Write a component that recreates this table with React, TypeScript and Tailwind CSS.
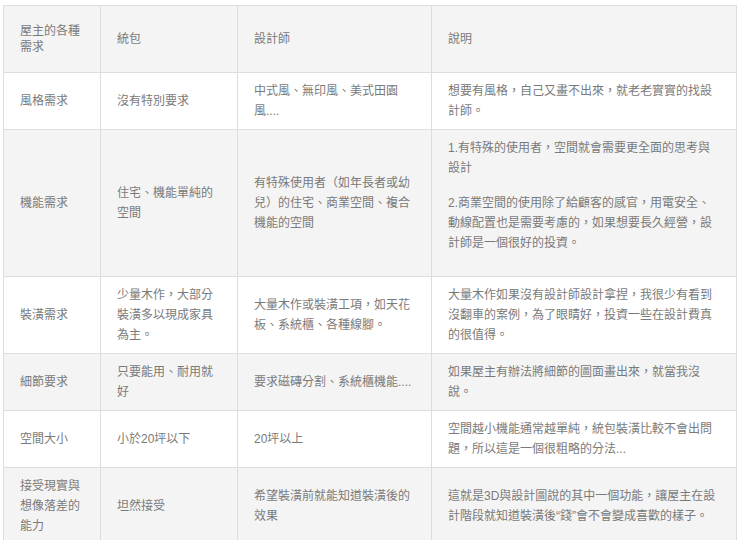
import React from 'react'

type Row = {
  need: string
  contractor: string
  designer: string
  note: string[]
}

const rows: Row[] = [
  {
    need: '風格需求',
    contractor: '沒有特別要求',
    designer: '中式風、無印風、美式田園風....',
    note: ['想要有風格，自己又畫不出來，就老老實實的找設計師。'],
  },
  {
    need: '機能需求',
    contractor: '住宅、機能單純的空間',
    designer: '有特殊使用者（如年長者或幼兒）的住宅、商業空間、複合機能的空間',
    note: [
      '1.有特殊的使用者，空間就會需要更全面的思考與設計',
      '2.商業空間的使用除了給顧客的感官，用電安全、動線配置也是需要考慮的，如果想要長久經營，設計師是一個很好的投資。',
    ],
  },
  {
    need: '裝潢需求',
    contractor: '少量木作，大部分裝潢多以現成家具為主。',
    designer: '大量木作或裝潢工項，如天花板、系統櫃、各種線腳。',
    note: ['大量木作如果沒有設計師設計拿捏，我很少有看到沒翻車的案例，為了眼睛好，投資一些在設計費真的很值得。'],
  },
  {
    need: '細節要求',
    contractor: '只要能用、耐用就好',
    designer: '要求磁磚分割、系統櫃機能....',
    note: ['如果屋主有辦法將細節的圖面畫出來，就當我沒說。'],
  },
  {
    need: '空間大小',
    contractor: '小於20坪以下',
    designer: '20坪以上',
    note: ['空間越小機能通常越單純，統包裝潢比較不會出問題，所以這是一個很粗略的分法...'],
  },
  {
    need: '接受現實與想像落差的能力',
    contractor: '坦然接受',
    designer: '希望裝潢前就能知道裝潢後的效果',
    note: ['這就是3D與設計圖說的其中一個功能，讓屋主在設計階段就知道裝潢後“錢”會不會變成喜歡的樣子。'],
  },
]

const cell = 'border border-[#dddddd] px-4 py-2 align-middle text-left font-normal'

export default function App() {
  return (
    <div className="min-h-[540px] bg-white pl-[3px] pt-[5px] font-['Liberation_Sans','Noto_Sans_CJK_TC',sans-serif] text-[12px] leading-[20px] text-[#7a7a7a]">
      <table className="w-[733px] table-fixed border-collapse">
        <colgroup>
          <col className="w-[97px]" />
          <col className="w-[137px]" />
          <col className="w-[194px]" />
          <col className="w-[305px]" />
        </colgroup>
        <thead>
          <tr className="h-[67px] bg-[#f4f4f4]">
            <th className={`${cell} leading-[16px]`}>屋主的各種需求</th>
            <th className={cell}>統包</th>
            <th className={cell}>設計師</th>
            <th className={cell}>說明</th>
          </tr>
        </thead>
        <tbody>
          {rows.map((row, i) => (
            <tr key={row.need} className={i % 2 === 0 ? 'bg-white' : 'bg-[#f4f4f4]'}>
              <td className={cell}>{row.need}</td>
              <td className={cell}>{row.contractor}</td>
              <td className={cell}>{row.designer}</td>
              <td className={cell}>
                {row.note.length > 1
                  ? row.note.map((p) => (
                      <p key={p} className="mb-[15px]">
                        {p}
                      </p>
                    ))
                  : row.note[0]}
              </td>
            </tr>
          ))}
        </tbody>
      </table>
    </div>
  )
}
